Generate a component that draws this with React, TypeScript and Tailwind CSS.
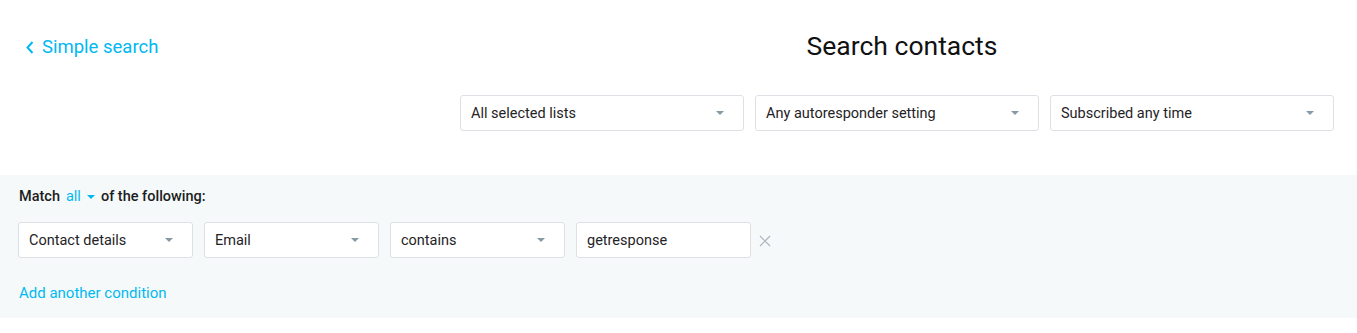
import { ReactNode } from 'react'

function Caret({ className = 'fill-[#869aa6]' }: { className?: string }) {
  return (
    <svg width="8" height="4" viewBox="0 0 8 4" className={className}>
      <path d="M0 0h8L4 4z" />
    </svg>
  )
}

function Select({ label, width }: { label: string; width: string }) {
  return (
    <div className={`${width} h-9 flex items-center justify-between pl-[10px] pr-[19px] bg-white border border-[#dde1e5] rounded-[3px] text-[14.5px] text-[#1f2326]`}>
      <span className="pt-[2px]">{label}</span>
      <Caret />
    </div>
  )
}

function Field({ children }: { children: ReactNode }) {
  return (
    <div className="w-[175px] h-9 flex items-center pl-[10px] pt-[2px] bg-white border border-[#dde1e5] rounded-[3px] text-[14.5px] text-[#1f2326]">
      {children}
    </div>
  )
}

export default function App() {
  return (
    <div className="w-full bg-white font-['Roboto',sans-serif]">
      <div className="flex items-center h-[34px] mt-[29px]">
        <div className="w-[447px] pl-[26px] pt-[3px]">
          <a className="inline-flex items-center gap-[8px] text-[18.5px] text-[#00b9f2] cursor-pointer">
            <svg width="8" height="13" viewBox="0 0 8 13" fill="none" stroke="currentColor" strokeWidth="2">
              <path d="M6.5 1L1.5 6.5l5 5.5" />
            </svg>
            Simple search
          </a>
        </div>
        <h1 className="flex-1 text-center text-[26.5px] leading-[34px] text-[#111]">Search contacts</h1>
      </div>

      <div className="flex justify-end gap-[11px] pr-[23px] mt-[32px]">
        <Select label="All selected lists" width="w-[284px]" />
        <Select label="Any autoresponder setting" width="w-[284px]" />
        <Select label="Subscribed any time" width="w-[284px]" />
      </div>

      <div className="mt-[44px] bg-[#f6f9fa] pl-[18px] pt-[14px] pb-[17px]">
        <div className="flex items-center gap-[6px] pl-px text-[14.5px] font-medium text-[#1b1e21] h-4">
          <span>Match</span>
          <span className="flex items-center gap-[6px] text-[#00b9f2] font-normal">
            all
            <Caret className="fill-[#00b9f2]" />
          </span>
          <span>of the following:</span>
        </div>

        <div className="flex items-center gap-[11px] mt-[17px]">
          <Select label="Contact details" width="w-[175px]" />
          <Select label="Email" width="w-[175px]" />
          <Select label="contains" width="w-[175px]" />
          <Field>getresponse</Field>
          <svg width="12" height="12" viewBox="0 0 12 12" stroke="#a9b5bc" strokeWidth="1.2" className="-ml-[3px] mt-[2px]">
            <path d="M1 1l10 10M11 1L1 11" />
          </svg>
        </div>

        <div className="mt-[27px] pl-px text-[15px] text-[#00b9f2] h-4 leading-4">Add another condition</div>
      </div>
    </div>
  )
}
